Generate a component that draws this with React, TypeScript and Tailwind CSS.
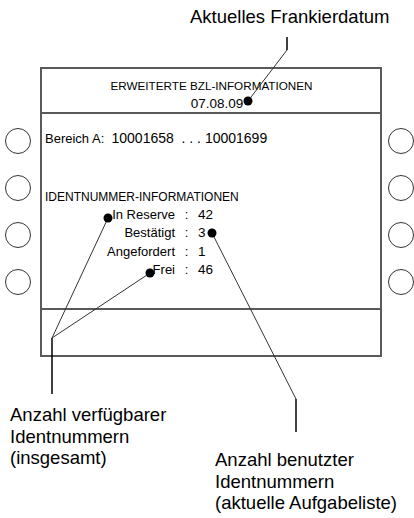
import React from "react";

function SideButtons({ side }: { side: "left" | "right" }) {
  return (
    <div className={`flex flex-col gap-[21px] pt-[61px] ${side === "left" ? "w-[40px] pl-[5px]" : "w-[32px] pl-[6px]"}`}>
      {[0, 1, 2, 3].map((i) => (
        <div key={i} className="w-[26px] h-[26px] rounded-full border border-[#333]" />
      ))}
    </div>
  );
}

const rows = [
  { label: "In Reserve", value: "42" },
  { label: "Bestätigt", value: "3" },
  { label: "Angefordert", value: "1" },
  { label: "Frei", value: "46" },
];

export default function App() {
  return (
    <div className="relative w-[414px] h-[518px] bg-white text-black overflow-hidden font-['Liberation_Sans',Arial,sans-serif]">
      {/* top annotation */}
      <div className="h-[67px] pl-[190px] pt-[6px] text-[18.5px] leading-[22px] whitespace-nowrap">Aktuelles Frankierdatum</div>

      <div className="flex">
        <SideButtons side="left" />

        {/* display */}
        <div className="w-[342px] h-[290px] border-2 border-[#5a5a5a] flex flex-col">
          <div className="h-[45px] border-b-2 border-[#5a5a5a] flex flex-col items-center pt-[8px] leading-[18px]">
            <div className="text-[11.7px] pl-[1px]">ERWEITERTE BZL-INFORMATIONEN</div>
            <div className="text-[13.5px] pl-[12px]">07.08.09</div>
          </div>
          <div className="h-[196px] border-b-2 border-[#5a5a5a] pl-[3px] text-[13px] leading-[18px]">
            <div className="pt-[15px] whitespace-nowrap">
              Bereich A:&nbsp;&nbsp;<span className="text-[14px]">10001658&nbsp;&nbsp;. . .&nbsp;10001699</span>
            </div>
            <div className="pt-[40px] text-[12px]">IDENTNUMMER-INFORMATIONEN</div>
            <div className="grid grid-cols-[130px_23px_auto] leading-[18.3px]">
              {rows.map((r) => (
                <React.Fragment key={r.label}>
                  <div className="text-right">{r.label}</div>
                  <div className="text-center">:</div>
                  <div className="text-[13.5px]">{r.value}</div>
                </React.Fragment>
              ))}
            </div>
          </div>
          <div className="flex-1" />
        </div>

        <SideButtons side="right" />
      </div>

      {/* bottom annotations */}
      <div className="flex pl-[10px] text-[18.5px] leading-[21.5px] whitespace-nowrap">
        <div className="w-[205px] pt-[47px]">
          Anzahl verfügbarer
          <br />
          Identnummern
          <br />
          (insgesamt)
        </div>
        <div className="pt-[92px]">
          Anzahl benutzter
          <br />
          Identnummern
          <br />
          (aktuelle Aufgabeliste)
        </div>
      </div>

      {/* callout lines */}
      <svg className="absolute inset-0 pointer-events-none" width="414" height="518" viewBox="0 0 414 518">
        <line x1="287" y1="37" x2="287" y2="50" stroke="#000" strokeWidth="1.5" />
        <line x1="287" y1="50" x2="248" y2="101" stroke="#333" strokeWidth="1" />
        <circle cx="248" cy="101" r="4.5" fill="#000" />

        <line x1="108" y1="218" x2="52" y2="338" stroke="#333" strokeWidth="1" />
        <line x1="150" y1="273" x2="52" y2="338" stroke="#333" strokeWidth="1" />
        <line x1="52" y1="338" x2="52" y2="394" stroke="#000" strokeWidth="1.5" />
        <circle cx="108" cy="218" r="4.5" fill="#000" />
        <circle cx="150" cy="273" r="4.5" fill="#000" />

        <line x1="212" y1="233" x2="296" y2="399" stroke="#333" strokeWidth="1" />
        <line x1="296" y1="399" x2="296" y2="432" stroke="#000" strokeWidth="1.5" />
        <circle cx="212" cy="233" r="4.5" fill="#000" />
      </svg>
    </div>
  );
}
